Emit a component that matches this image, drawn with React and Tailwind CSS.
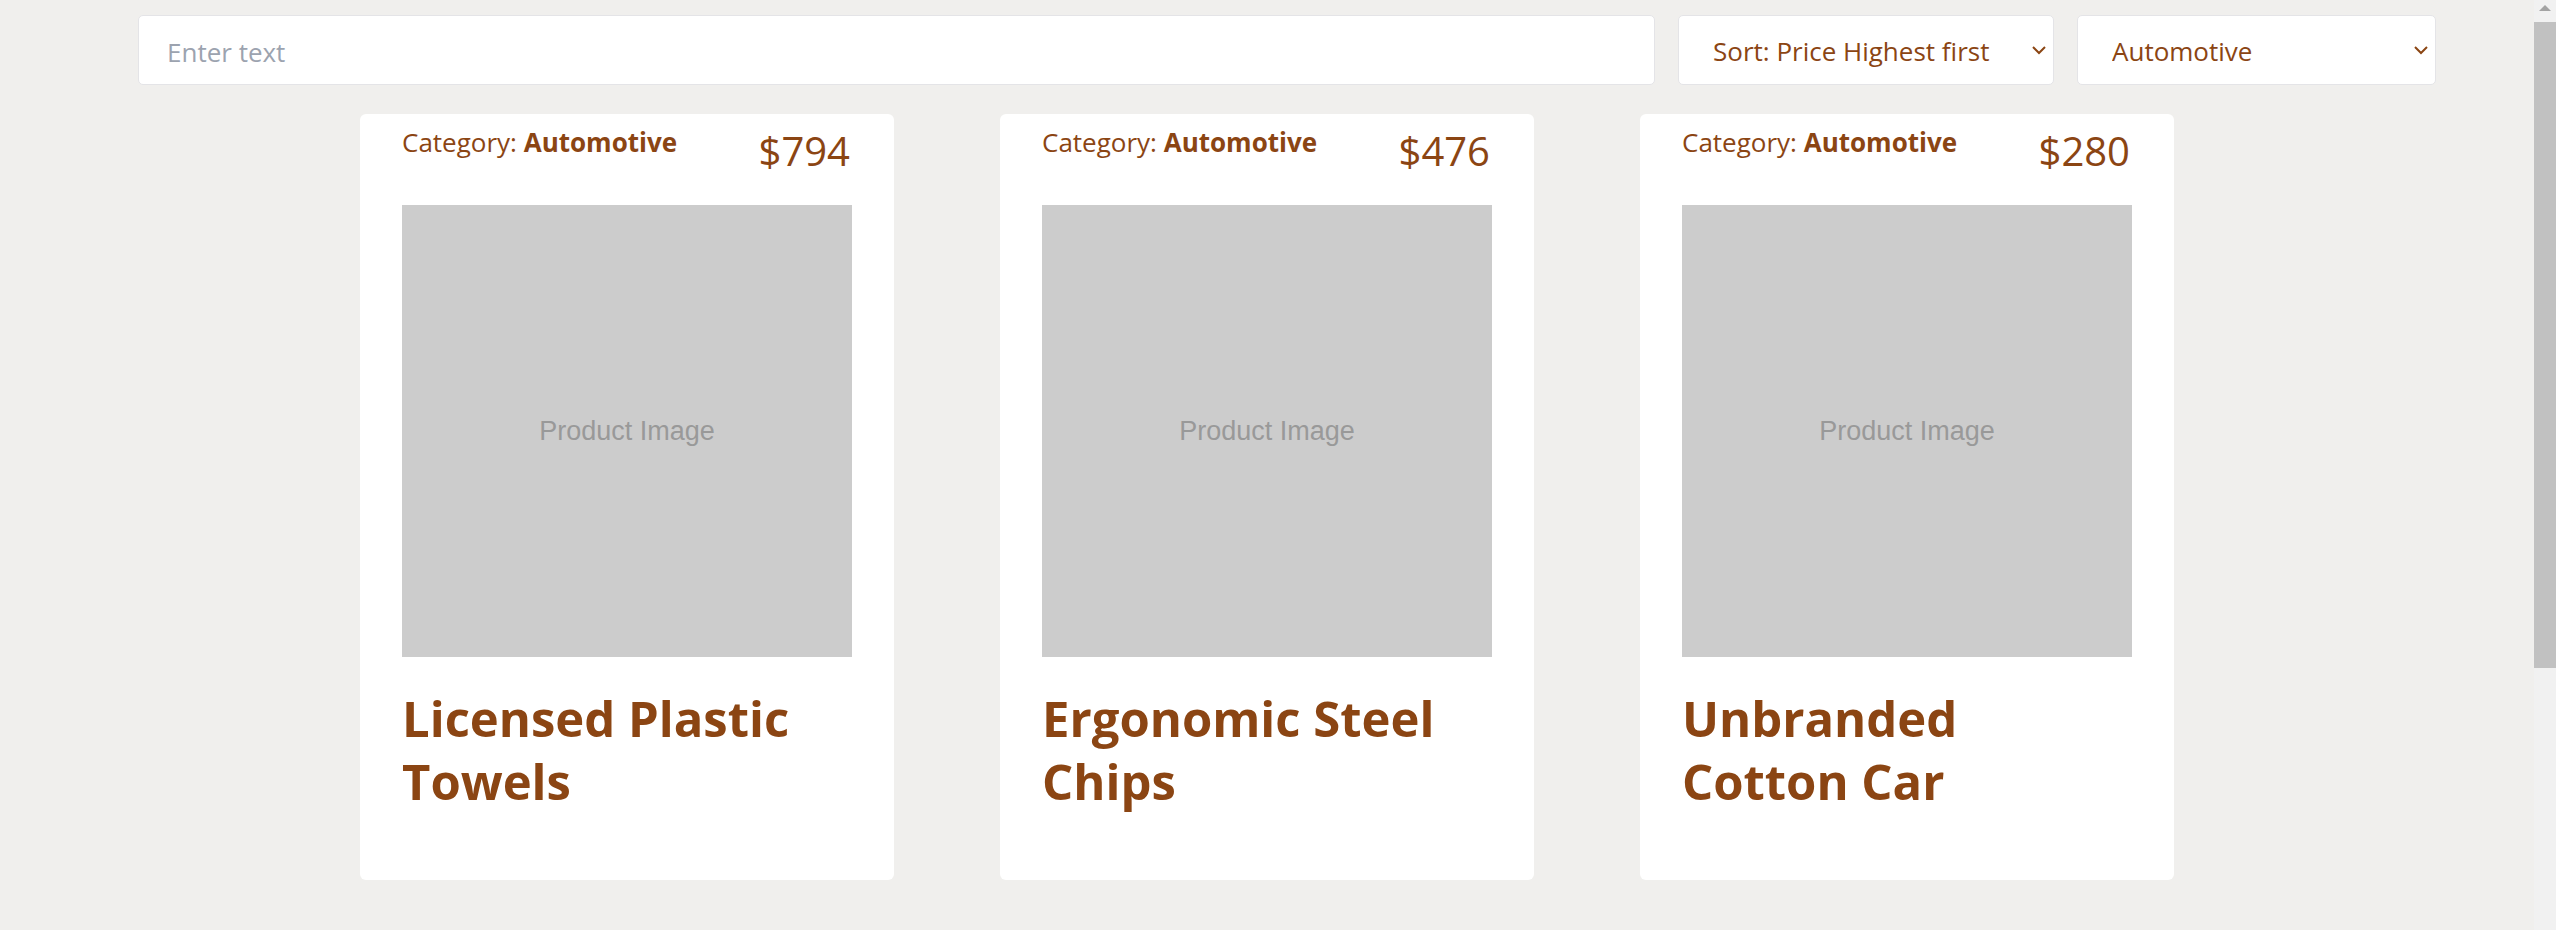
import { useState } from "react"

const products = [
  { id: 1, name: "Licensed Plastic Towels", price: 794, category: "Automotive" },
  { id: 2, name: "Ergonomic Steel Chips", price: 476, category: "Automotive" },
  { id: 3, name: "Unbranded Cotton Car", price: 280, category: "Automotive" },
]

function Chevron() {
  return (
    <svg
      className="pointer-events-none absolute right-[7px] top-1/2 h-[10px] w-[16px] -translate-y-1/2"
      viewBox="0 0 16 10"
      fill="none"
      stroke="#8b4513"
      strokeWidth={2}
    >
      <path d="M2 2l6 6 6-6" />
    </svg>
  )
}

function ProductCard({ product }) {
  return (
    <div className="flex h-[766px] w-[534px] flex-col rounded-[6px] bg-white px-[42px]">
      <div className="flex h-[91px] items-start justify-between pt-[10px]">
        <p className="text-[26px] leading-[36px]">
          Category: <span className="font-bold">{product.category}</span>
        </p>
        <p className="pr-[2px] pt-[4px] text-[40px] leading-[46px]">${product.price}</p>
      </div>
      <div className="flex h-[452px] w-full items-center justify-center bg-[#cccccc]">
        <span className="font-['Liberation_Sans',Arial,sans-serif] text-[27px] text-[#999999]">
          Product Image
        </span>
      </div>
      <h2 className="mt-[30px] text-[49px] font-bold leading-[63px]">{product.name}</h2>
    </div>
  )
}

// window scrollbar as it shows in the screenshot
function Scrollbar() {
  return (
    <div className="flex w-[22px] shrink-0 flex-col bg-[#f1f1f1]">
      <div className="flex h-[22px] items-start justify-center pt-[5px]">
        <svg className="h-[6px] w-[12px]" viewBox="0 0 12 6">
          <path d="M0 6L6 0l6 6z" fill="#a3a3a3" />
        </svg>
      </div>
      <div className="h-[646px] w-full bg-[#c1c1c1]" />
    </div>
  )
}

export default function App() {
  const [query, setQuery] = useState("")
  const [sort, setSort] = useState("high")
  const [category, setCategory] = useState("Automotive")

  const visible = products
    .filter((p) => p.category === category)
    .filter((p) => p.name.toLowerCase().includes(query.toLowerCase()))
    .sort((a, b) => (sort === "high" ? b.price - a.price : a.price - b.price))

  return (
    <div className="flex min-h-screen bg-[#f0efed] font-['Open_Sans',sans-serif] text-[#8b4513]">
      <main className="flex-1 pb-[50px]">
        <div className="flex gap-[23px] pl-[138px] pr-[98px] pt-[15px]">
          <input
            value={query}
            onChange={(e) => setQuery(e.target.value)}
            placeholder="Enter text"
            className="h-[70px] flex-1 rounded-[5px] border border-[#e4e4e7] bg-white px-[28px] pt-[3px] text-[26px] text-[#8b4513] outline-none placeholder:text-[#9ca3af]"
          />
          <div className="relative w-[376px]">
            <select
              value={sort}
              onChange={(e) => setSort(e.target.value)}
              className="h-[70px] w-full appearance-none rounded-[5px] border border-[#e4e4e7] bg-white pl-[34px] pt-[3px] text-[26px] text-[#8b4513] outline-none"
            >
              <option value="high">Sort: Price Highest first</option>
              <option value="low">Sort: Price Lowest first</option>
            </select>
            <Chevron />
          </div>
          <div className="relative w-[359px]">
            <select
              value={category}
              onChange={(e) => setCategory(e.target.value)}
              className="h-[70px] w-full appearance-none rounded-[5px] border border-[#e4e4e7] bg-white pl-[34px] pt-[3px] text-[26px] text-[#8b4513] outline-none"
            >
              <option>Automotive</option>
              <option>Electronics</option>
              <option>Home & Garden</option>
            </select>
            <Chevron />
          </div>
        </div>

        <div className="mt-[29px] flex justify-center gap-[106px]">
          {visible.map((p) => (
            <ProductCard key={p.id} product={p} />
          ))}
        </div>
      </main>
      <Scrollbar />
    </div>
  )
}
